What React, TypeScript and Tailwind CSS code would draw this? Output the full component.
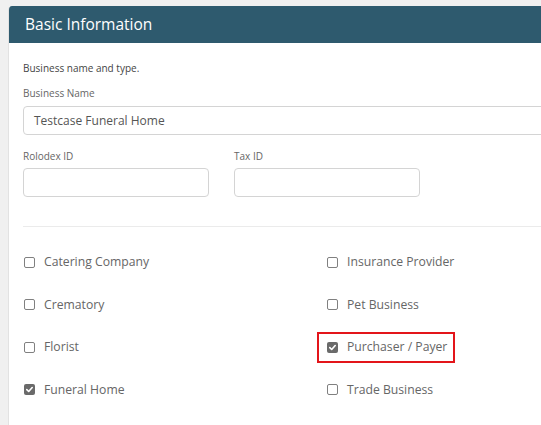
import React from "react";

const font = { fontFamily: '"Open Sans", "Noto Sans", sans-serif' };

function Box({ checked }: { checked?: boolean }) {
  if (checked) {
    return (
      <span className="flex h-[11px] w-[11px] items-center justify-center rounded-[2px] bg-[#6a6a6a]">
        <svg width="9" height="9" viewBox="0 0 10 10">
          <path d="M2 5.2 L4.1 7.2 L8 2.8" fill="none" stroke="white" strokeWidth="1.8" strokeLinecap="round" strokeLinejoin="round" />
        </svg>
      </span>
    );
  }
  return <span className="block h-[11px] w-[11px] rounded-[2px] border border-[#808080] bg-white" />;
}

function Item({ label, checked, highlight }: { label: string; checked?: boolean; highlight?: boolean }) {
  return (
    <div className="relative flex h-[42.5px] items-center">
      {highlight && (
        <span className="absolute left-[-9px] top-[6px] h-[31px] w-[138px] border-2 border-[#e3151a]" />
      )}
      <div className="ml-[1px] flex items-center">
        <Box checked={checked} />
      </div>
      <span className="ml-[9px] text-[12.2px] leading-[18px] text-[#666666]">{label}</span>
    </div>
  );
}

export default function App() {
  return (
    <div className="flex h-[425px] w-[541px] flex-col overflow-hidden bg-[#f0f0f0] pl-[8px] pt-[6px]" style={font}>
      <div className="w-[560px] flex-1 overflow-hidden rounded-t-[4px] border-l border-[#e2e2e2] bg-white">
        <div className="flex h-[37px] items-center bg-[#2e5a6e] pl-[16px] text-[15.5px] text-white">Basic Information</div>
        <div className="pl-[14px] pt-[18px]">
          <div className="text-[10px] leading-[15px] text-[#444444]">Business name and type.</div>
          <div className="mt-[10px] text-[10px] leading-[15px] text-[#666666]">Business Name</div>
          <div className="mt-[5px] flex h-[29px] items-center rounded-[4px] border border-[#d4d4d4] pl-[10px] text-[12px] text-[#555555]">
            Testcase Funeral Home
          </div>
          <div className="mt-[14px] flex gap-[25px]">
            <div>
              <div className="text-[10px] leading-[15px] text-[#666666]">Rolodex ID</div>
              <div className="mt-[4px] h-[29px] w-[186px] rounded-[4px] border border-[#d4d4d4]" />
            </div>
            <div>
              <div className="text-[10px] leading-[15px] text-[#666666]">Tax ID</div>
              <div className="mt-[4px] h-[29px] w-[186px] rounded-[4px] border border-[#d4d4d4]" />
            </div>
          </div>
          <div className="mt-[29px] h-px bg-[#ebebeb]" />
          <div className="mt-[14px] grid grid-cols-[303px_1fr]">
            <div>
              <Item label="Catering Company" />
              <Item label="Crematory" />
              <Item label="Florist" />
              <Item label="Funeral Home" checked />
            </div>
            <div>
              <Item label="Insurance Provider" />
              <Item label="Pet Business" />
              <Item label="Purchaser / Payer" checked highlight />
              <Item label="Trade Business" />
            </div>
          </div>
        </div>
      </div>
    </div>
  );
}
